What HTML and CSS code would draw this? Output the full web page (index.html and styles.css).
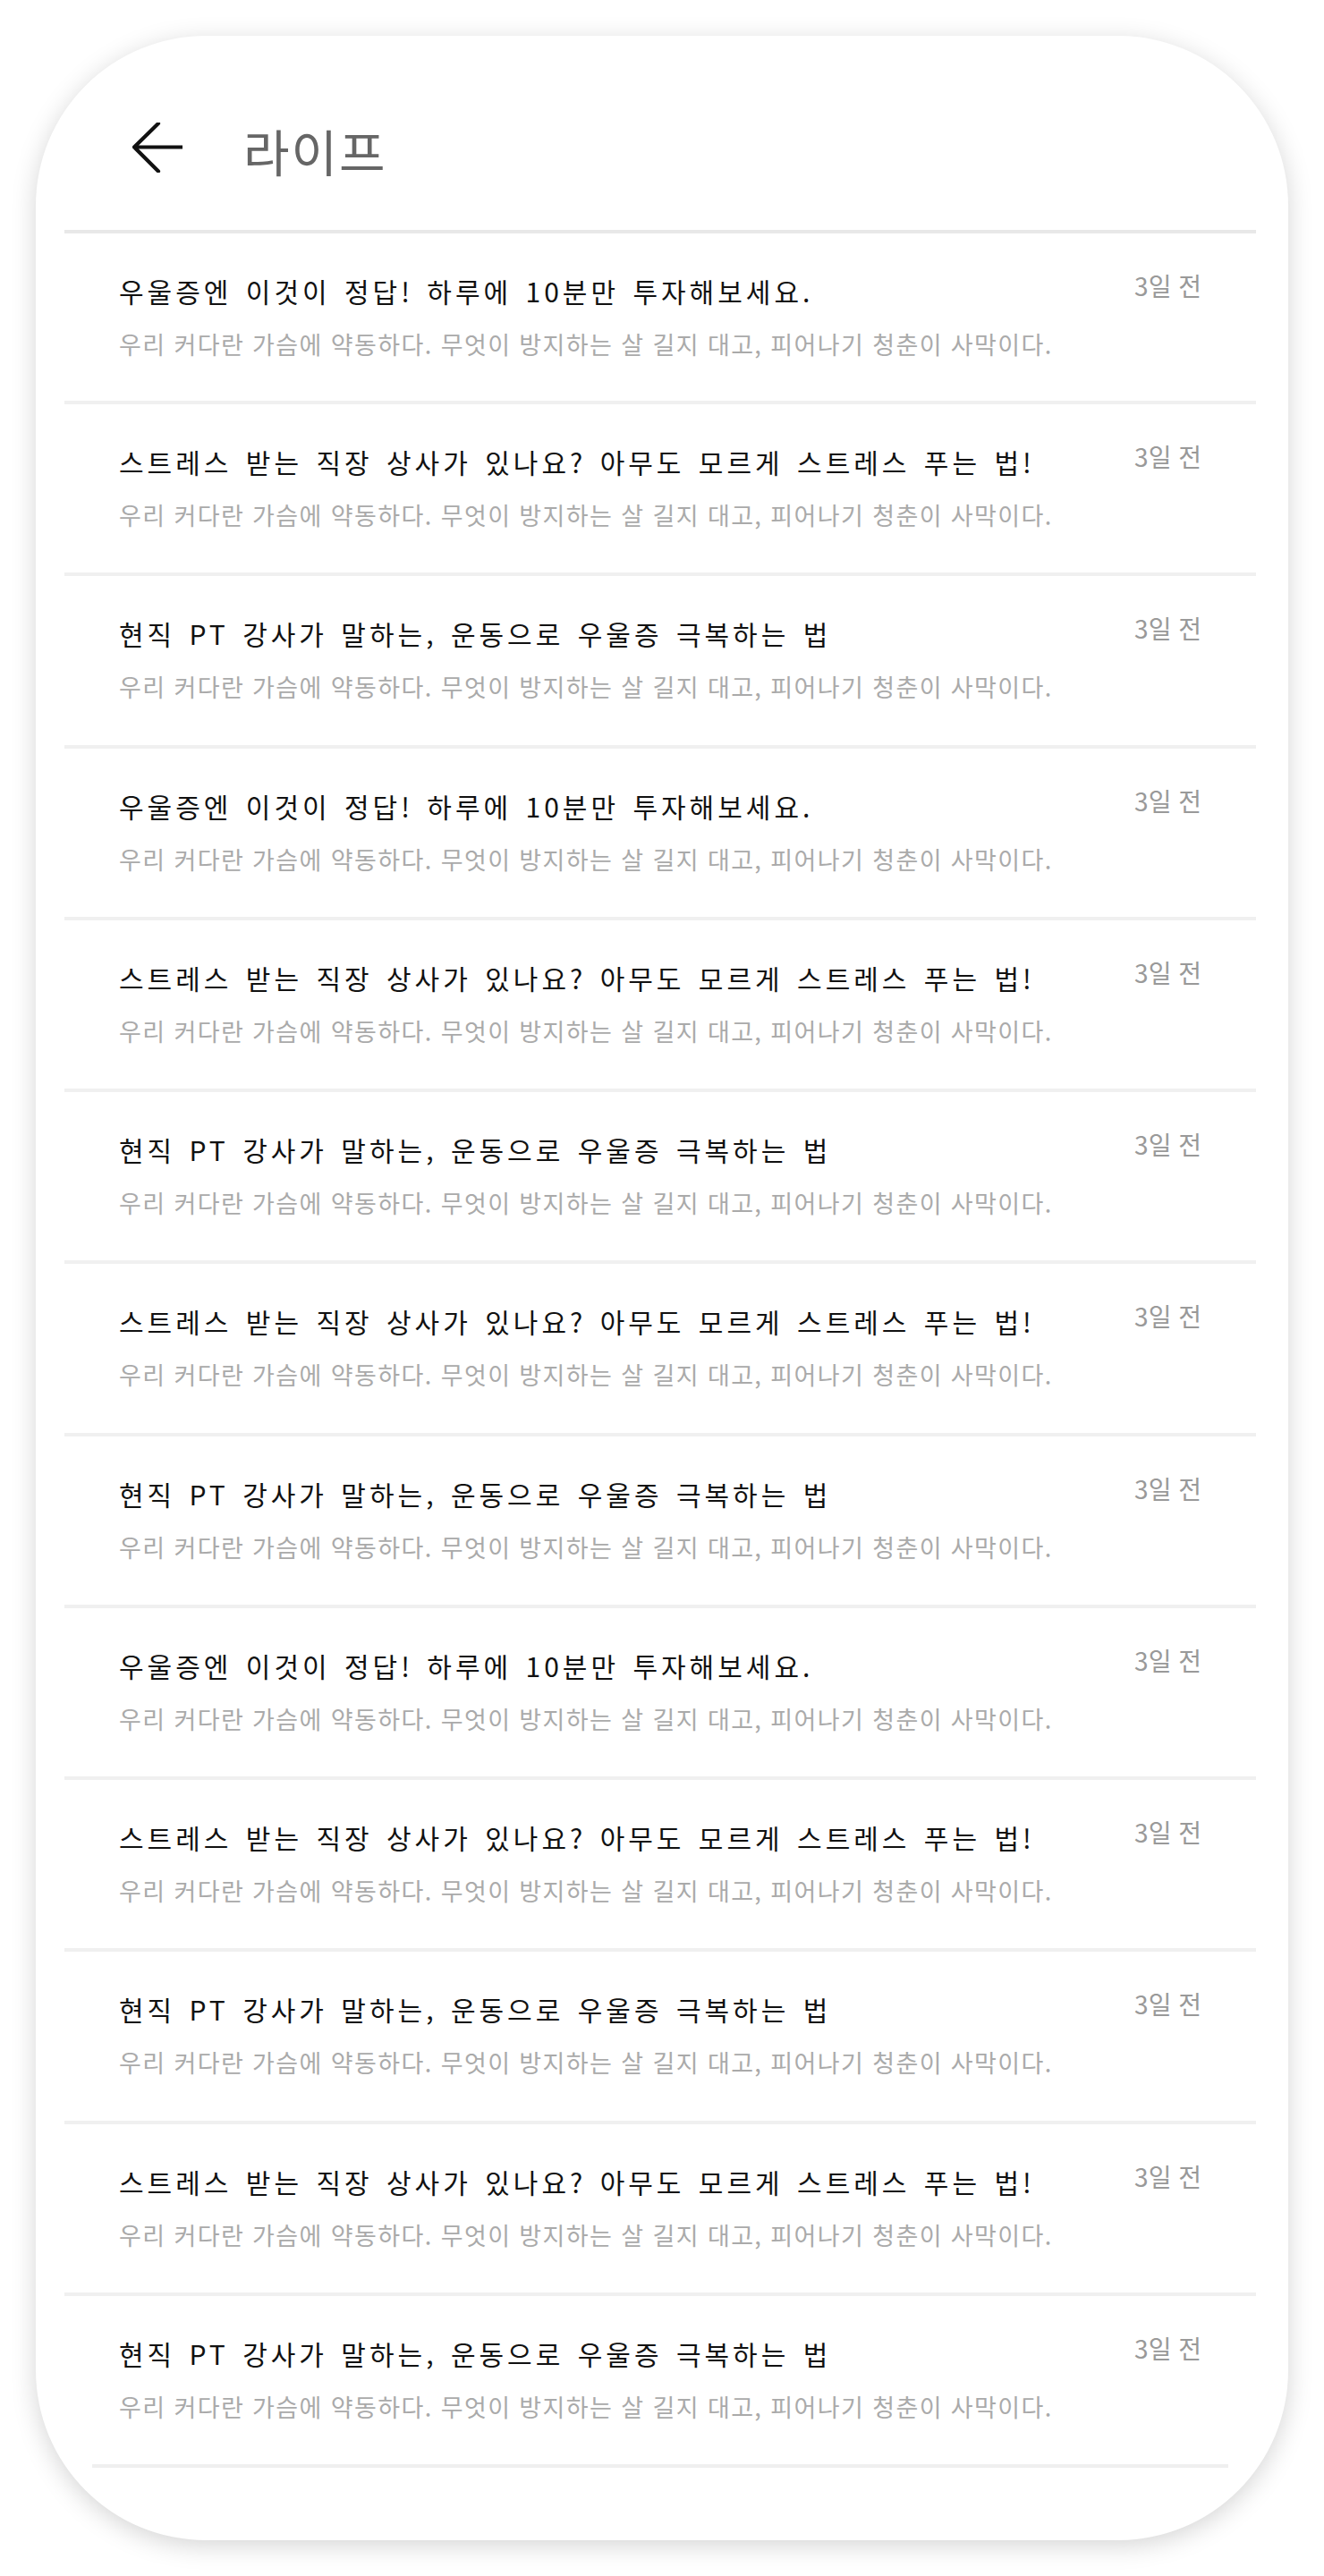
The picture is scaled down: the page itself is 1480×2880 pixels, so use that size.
FILE: index.html
```html
<!DOCTYPE html>
<html lang="ko">
<head>
<meta charset="utf-8">
<title>라이프</title>
<link rel="stylesheet" href="styles.css">
</head>
<body>
<div class="phone">
  <header class="header">
    <svg class="back" viewBox="0 0 56 56" width="56" height="56" aria-label="뒤로">
      <path d="M2 27.5 H55 M29 1 L2 27.5 L29 54.5" fill="none" stroke="#111" stroke-width="4.2" stroke-linecap="round" stroke-linejoin="round"/>
    </svg>
    <h1 class="title">라이프</h1>
  </header>
  <ul class="list">
    <li class="item item-first"><div class="text"><p class="item-title">우울증엔 이것이 정답! 하루에 10분만 투자해보세요.</p><p class="item-sub">우리 커다란 가슴에 약동하다. 무엇이 방지하는 살 길지 대고, 피어나기 청춘이 사막이다.</p></div><span class="date">3일 전</span></li>
    <li class="item"><div class="text"><p class="item-title">스트레스 받는 직장 상사가 있나요? 아무도 모르게 스트레스 푸는 법!</p><p class="item-sub">우리 커다란 가슴에 약동하다. 무엇이 방지하는 살 길지 대고, 피어나기 청춘이 사막이다.</p></div><span class="date">3일 전</span></li>
    <li class="item"><div class="text"><p class="item-title">현직 PT 강사가 말하는, 운동으로 우울증 극복하는 법</p><p class="item-sub">우리 커다란 가슴에 약동하다. 무엇이 방지하는 살 길지 대고, 피어나기 청춘이 사막이다.</p></div><span class="date">3일 전</span></li>
    <li class="item"><div class="text"><p class="item-title">우울증엔 이것이 정답! 하루에 10분만 투자해보세요.</p><p class="item-sub">우리 커다란 가슴에 약동하다. 무엇이 방지하는 살 길지 대고, 피어나기 청춘이 사막이다.</p></div><span class="date">3일 전</span></li>
    <li class="item"><div class="text"><p class="item-title">스트레스 받는 직장 상사가 있나요? 아무도 모르게 스트레스 푸는 법!</p><p class="item-sub">우리 커다란 가슴에 약동하다. 무엇이 방지하는 살 길지 대고, 피어나기 청춘이 사막이다.</p></div><span class="date">3일 전</span></li>
    <li class="item"><div class="text"><p class="item-title">현직 PT 강사가 말하는, 운동으로 우울증 극복하는 법</p><p class="item-sub">우리 커다란 가슴에 약동하다. 무엇이 방지하는 살 길지 대고, 피어나기 청춘이 사막이다.</p></div><span class="date">3일 전</span></li>
    <li class="item"><div class="text"><p class="item-title">스트레스 받는 직장 상사가 있나요? 아무도 모르게 스트레스 푸는 법!</p><p class="item-sub">우리 커다란 가슴에 약동하다. 무엇이 방지하는 살 길지 대고, 피어나기 청춘이 사막이다.</p></div><span class="date">3일 전</span></li>
    <li class="item"><div class="text"><p class="item-title">현직 PT 강사가 말하는, 운동으로 우울증 극복하는 법</p><p class="item-sub">우리 커다란 가슴에 약동하다. 무엇이 방지하는 살 길지 대고, 피어나기 청춘이 사막이다.</p></div><span class="date">3일 전</span></li>
    <li class="item"><div class="text"><p class="item-title">우울증엔 이것이 정답! 하루에 10분만 투자해보세요.</p><p class="item-sub">우리 커다란 가슴에 약동하다. 무엇이 방지하는 살 길지 대고, 피어나기 청춘이 사막이다.</p></div><span class="date">3일 전</span></li>
    <li class="item"><div class="text"><p class="item-title">스트레스 받는 직장 상사가 있나요? 아무도 모르게 스트레스 푸는 법!</p><p class="item-sub">우리 커다란 가슴에 약동하다. 무엇이 방지하는 살 길지 대고, 피어나기 청춘이 사막이다.</p></div><span class="date">3일 전</span></li>
    <li class="item"><div class="text"><p class="item-title">현직 PT 강사가 말하는, 운동으로 우울증 극복하는 법</p><p class="item-sub">우리 커다란 가슴에 약동하다. 무엇이 방지하는 살 길지 대고, 피어나기 청춘이 사막이다.</p></div><span class="date">3일 전</span></li>
    <li class="item"><div class="text"><p class="item-title">스트레스 받는 직장 상사가 있나요? 아무도 모르게 스트레스 푸는 법!</p><p class="item-sub">우리 커다란 가슴에 약동하다. 무엇이 방지하는 살 길지 대고, 피어나기 청춘이 사막이다.</p></div><span class="date">3일 전</span></li>
    <li class="item item-last"><div class="text"><p class="item-title">현직 PT 강사가 말하는, 운동으로 우울증 극복하는 법</p><p class="item-sub">우리 커다란 가슴에 약동하다. 무엇이 방지하는 살 길지 대고, 피어나기 청춘이 사막이다.</p></div><span class="date">3일 전</span></li>
  </ul>
  <div class="end-line"></div>
</div>
</body>
</html>
```
FILE: styles.css
```css
html, body {
  margin: 0;
  padding: 0;
  background: #fff;
}
body {
  padding: 40px;
  font-family: "Noto Sans CJK KR", "Noto Sans", sans-serif;
}
.phone {
  width: 1400px;
  height: 2800px;
  background: #fff;
  border-radius: 190px;
  box-shadow: 0 6px 28px rgba(0, 0, 0, 0.17);
  overflow: hidden;
}
.header {
  box-sizing: border-box;
  height: 217px;
  padding: 97px 0 0 108px;
  display: flex;
  align-items: flex-start;
  gap: 68px;
}
.back {
  display: block;
  flex: none;
}
.title {
  margin: 3px 0 0;
  font-size: 56px;
  line-height: 56px;
  font-weight: 400;
  color: #666;
  letter-spacing: 2px;
}
.list {
  list-style: none;
  margin: 0 36px 0 32px;
  padding: 0;
  border-top: 4px solid #e8e8e8;
}
.item {
  box-sizing: border-box;
  height: 192.25px;
  padding: 40px 61px 0 61px;
  display: flex;
  justify-content: space-between;
  align-items: flex-start;
  border-bottom: 4px solid #f0f0f0;
}
.item-first {
  height: 191px;
}
.item-last {
  border-bottom: 0;
  height: 188.25px;
}
.text {
  min-width: 0;
}
.item-title {
  margin: 4px 0 0;
  font-size: 30px;
  line-height: 40px;
  color: #111;
  letter-spacing: 4px;
  word-spacing: 3px;
}
.item-sub {
  margin: 22px 0 0;
  font-size: 27px;
  line-height: 36px;
  color: #aaa;
  letter-spacing: 1.4px;
}
.date {
  flex: none;
  font-size: 28px;
  line-height: 36px;
  color: #999;
}
.end-line {
  height: 4px;
  margin: 0 67px 0 63px;
  background: #efefef;
}
```
